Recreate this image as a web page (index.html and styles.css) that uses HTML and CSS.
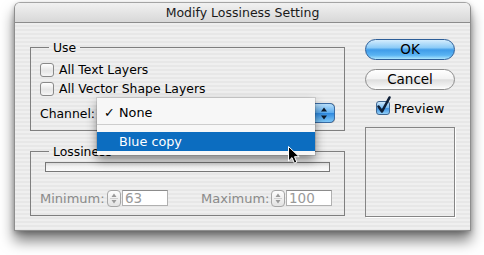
FILE: index.html
```html
<!DOCTYPE html>
<html>
<head>
<meta charset="utf-8">
<title>Modify Lossiness Setting</title>
<link rel="stylesheet" href="styles.css">
</head>
<body>
<div class="window">
  <div class="titlebar">Modify Lossiness Setting</div>
  <div class="content">
    <div class="left">
      <fieldset class="group use">
        <legend>Use</legend>
        <div class="check-row"><span class="cb"></span><span>All Text Layers</span></div>
        <div class="check-row"><span class="cb"></span><span>All Vector Shape Layers</span></div>
        <div class="channel-row">
          <span class="channel-label">Channel:</span>
          <div class="popup">
            <span class="popup-cap">
              <svg width="8" height="13" viewBox="0 0 8 13"><path d="M4 0.5 L7 4.5 L1 4.5 Z M1 8.5 L7 8.5 L4 12.5 Z" fill="#0d1a2a"/></svg>
            </span>
            <div class="menu">
              <div class="menu-item"><span class="mark">✓</span>None</div>
              <div class="menu-sep"></div>
              <div class="menu-item selected"><span class="mark"></span>Blue copy</div>
            </div>
          </div>
        </div>
      </fieldset>
      <fieldset class="group loss">
        <legend>Lossiness</legend>
        <div class="track"></div>
        <div class="range-row">
          <span class="range-label min">Minimum:</span>
          <span class="stepper"><svg width="12" height="15" viewBox="0 0 12 15"><path d="M6 2.5 L8.5 6 L3.5 6 Z M3.5 9 L8.5 9 L6 12.5 Z" fill="#9a9a9a"/><path d="M2 7.5 H10" stroke="#d0d0d0" stroke-width="1"/></svg></span>
          <span class="field">63</span>
          <span class="range-label max">Maximum:</span>
          <span class="stepper"><svg width="12" height="15" viewBox="0 0 12 15"><path d="M6 2.5 L8.5 6 L3.5 6 Z M3.5 9 L8.5 9 L6 12.5 Z" fill="#9a9a9a"/><path d="M2 7.5 H10" stroke="#d0d0d0" stroke-width="1"/></svg></span>
          <span class="field">100</span>
        </div>
      </fieldset>
    </div>
    <div class="right">
      <div class="btn ok">OK</div>
      <div class="btn cancel">Cancel</div>
      <div class="check-row preview-row">
        <span class="cb checked"><svg class="tick" width="16" height="19" viewBox="0 0 16 19"><path d="M2.5 10.5 L6 15.5 L13.5 1.5" fill="none" stroke="#0f2038" stroke-width="2.6" stroke-linecap="round" stroke-linejoin="round"/></svg></span>
        <span>Preview</span>
      </div>
      <div class="preview-box"></div>
    </div>
  </div>
</div>
<svg class="cursor" width="14" height="20" viewBox="0 0 14 20"><path d="M1.5 1.5 L1.5 16 L5 12.6 L7.4 18.2 L9.8 17.2 L7.5 11.7 L12.2 11.7 Z" fill="#000" stroke="#fff" stroke-width="1" stroke-linejoin="round"/></svg>
</body>
</html>
```

FILE: styles.css
```css
html, body {
  margin: 0;
  padding: 0;
}
body {
  background: #ffffff;
  width: 484px;
  height: 255px;
  overflow: hidden;
  font-family: "DejaVu Sans", "Liberation Sans", sans-serif;
  font-size: 12.4px;
  color: #000;
  position: relative;
}
.window {
  margin: 2px 0 0 14px;
  width: 457px;
  height: 229px;
  box-sizing: border-box;
  border: 1px solid #8e8e8e;
  border-top-color: #a4a4a4;
  border-radius: 6px 6px 0 0;
  background: repeating-linear-gradient(to bottom, #efefef 0 2px, #e7e7e7 2px 4px);
  box-shadow: 0 10px 14px rgba(0,0,0,0.5), 0 2px 5px rgba(0,0,0,0.25);
}
.titlebar {
  height: 19px;
  border-bottom: 1px solid #8c8c8c;
  border-radius: 5px 5px 0 0;
  background: linear-gradient(#f1f1f1, #d8d8d8);
  text-align: center;
  font-size: 12.5px;
  line-height: 19px;
  color: #1a1a1a;
}
.content {
  display: flex;
  gap: 20px;
  padding: 16px 0 0 15px;
}
.left {
  width: 315px;
  padding-top: 1px;
}
.group {
  margin: 0;
  border: 1px solid #7f7f7f;
  padding: 5px 9px 7px;
  min-width: 0;
}
.group legend {
  padding: 0 4px;
  margin-left: 9px;
  line-height: 15px;
}
.loss {
  margin-top: 13px;
  padding: 3px 9px 8px;
}
.check-row {
  display: flex;
  align-items: center;
  height: 19px;
}
.cb {
  position: relative;
  width: 14px;
  height: 14px;
  box-sizing: border-box;
  border: 1px solid #8a8a8a;
  border-radius: 3px;
  background: linear-gradient(#ffffff, #e6e6e6 55%, #f6f6f6);
  margin-right: 5px;
  flex: none;
}
.cb.checked {
  border-color: #3f6690;
  background: linear-gradient(#cfe8fc, #79bdf2 48%, #3d92e2 55%, #93d0f8);
  margin-right: 4px;
}
.tick {
  position: absolute;
  left: -1px;
  top: -6px;
  overflow: visible;
}
.channel-row {
  display: flex;
  align-items: center;
  margin-top: 5px;
  height: 20px;
}
.channel-label {
  width: 57px;
  flex: none;
}
.popup {
  position: relative;
  flex: 1;
  height: 20px;
  box-sizing: border-box;
  border: 1px solid #8e8e8e;
  border-radius: 4px;
  background: linear-gradient(#ffffff, #eeeeee);
  display: flex;
  justify-content: flex-end;
}
.popup-cap {
  width: 22px;
  margin: -1px -1px -1px 0;
  box-sizing: border-box;
  border: 1px solid #3a6ba3;
  border-radius: 0 5px 5px 0;
  background: linear-gradient(#b7defa, #5eaef0 48%, #2f8ae0 52%, #7ec7f7);
  display: flex;
  align-items: center;
  justify-content: center;
}
.menu {
  position: absolute;
  left: -1px;
  top: -6px;
  width: 218px;
  box-sizing: border-box;
  padding: 5px 0 4px;
  background: #f7f7f7;
  box-shadow: 0 5px 10px rgba(0,0,0,0.45), 0 0 0 1px rgba(0,0,0,0.1);
  z-index: 5;
}
.menu-item {
  height: 18px;
  display: flex;
  align-items: center;
  padding-left: 7px;
  font-size: 12.8px;
}
.mark {
  width: 15px;
  flex: none;
}
.menu-sep {
  margin: 3px 0 7px;
  height: 1px;
  background: #cdcdcd;
}
.menu-item.selected {
  height: 19px;
  background: #0c6dc0;
  color: #fff;
}
.track {
  height: 10px;
  box-sizing: border-box;
  margin: 0 5px;
  border: 1px solid #777;
  background: linear-gradient(#d8d8d8, #f2f2f2 45%, #fafafa);
}
.range-row {
  display: flex;
  align-items: center;
  margin-top: 17px;
  height: 18px;
  color: #8a8a8a;
}
.range-label {
  flex: none;
  font-size: 13px;
}
.range-label.min {
  width: 67px;
}
.range-label.max {
  width: 70px;
  margin-left: 33px;
}
.stepper {
  width: 14px;
  height: 17px;
  box-sizing: border-box;
  border: 1px solid #a6a6a6;
  border-radius: 4px;
  background: linear-gradient(#fdfdfd, #e3e3e3);
  margin-right: 1px;
  display: flex;
  align-items: center;
  justify-content: center;
  flex: none;
}
.field {
  width: 46px;
  height: 16px;
  box-sizing: border-box;
  border: 1px solid #b0b0b0;
  border-top-color: #8c8c8c;
  background: #fff;
  padding-left: 2px;
  line-height: 14px;
  font-size: 13.5px;
  color: #9a9a9a;
  flex: none;
}
.right {
  width: 90px;
  display: flex;
  flex-direction: column;
}
.btn {
  height: 21px;
  box-sizing: border-box;
  border-radius: 11px;
  text-align: center;
  line-height: 19px;
  font-size: 13.5px;
}
.ok {
  border: 1px solid #2d5e98;
  background: linear-gradient(#d4edfd 0%, #8ccbf7 40%, #3f9ce9 52%, #5ab4f3 80%, #ade6fd 100%);
}
.cancel {
  margin-top: 9px;
  border: 1px solid #8c8c8c;
  background: linear-gradient(#ffffff 0%, #f3f3f3 45%, #dedede 52%, #f0f0f0 82%, #ffffff 100%);
}
.preview-row {
  justify-content: center;
  margin-top: 11px;
  height: 14px;
  font-size: 13px;
}
.preview-box {
  margin-top: 12px;
  height: 90px;
  box-sizing: border-box;
  border: 1px solid #858585;
  box-shadow: 1px 1px 0 #ffffff;
}
.cursor {
  position: absolute;
  left: 287px;
  top: 145px;
  z-index: 10;
}
```
